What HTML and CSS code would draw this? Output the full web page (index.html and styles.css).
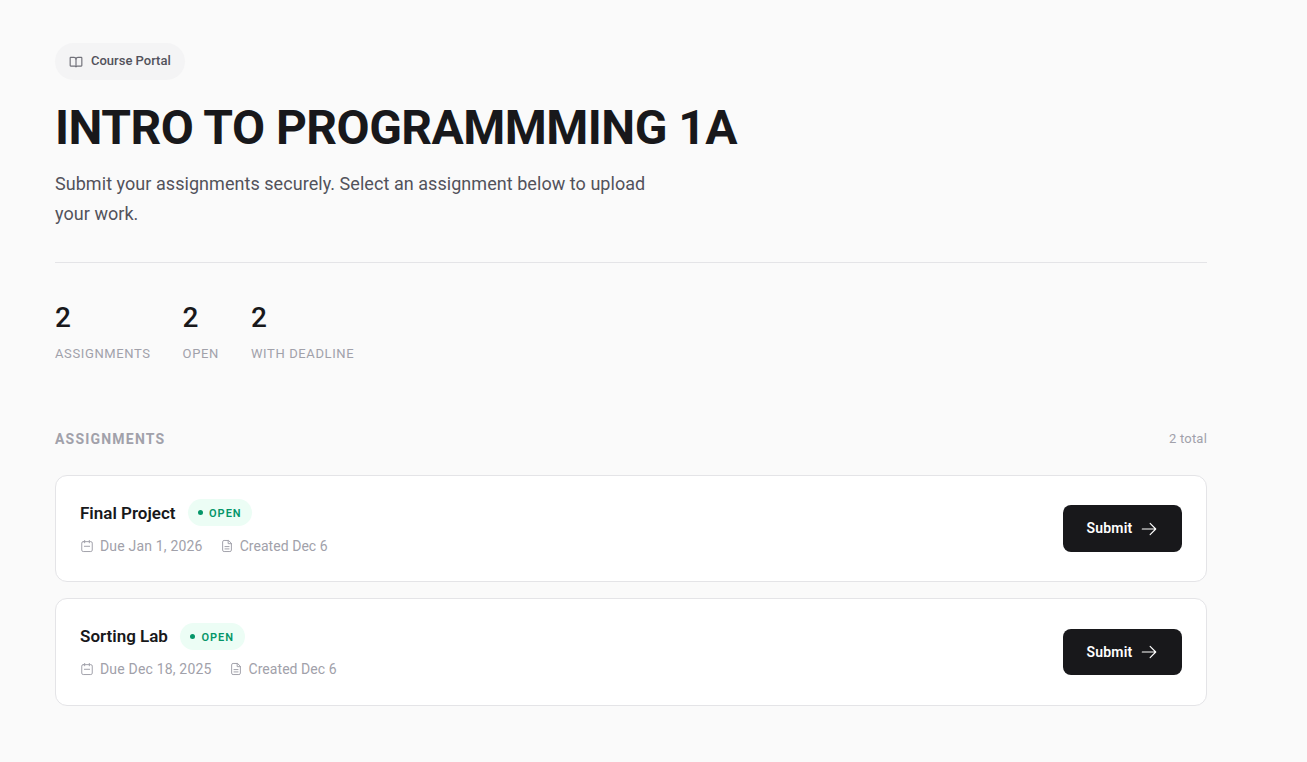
FILE: index.html
```html
<!DOCTYPE html>
<html lang="en">
<head>
<meta charset="utf-8">
<title>Intro to Programmming 1A</title>
<link rel="stylesheet" href="styles.css">
</head>
<body>
<main class="page">
  <header class="hero">
    <div class="pill">
      <svg class="pill-icon" viewBox="0 0 24 24" fill="none" stroke="currentColor" stroke-width="2" stroke-linecap="round" stroke-linejoin="round"><path d="M12 7v13"/><path d="M3 19a1 1 0 0 1-1-1V5a1 1 0 0 1 1-1h5.500a3.500 3.500 0 0 1 3.500 3 3.500 3.500 0 0 1 3.500-3H21a1 1 0 0 1 1 1v13a1 1 0 0 1-1 1h-6.500a2.500 2.500 0 0 0-2.500 1 2.500 2.500 0 0 0-2.500-1z"/></svg>
      <span class="pill-text">Course Portal</span>
    </div>
    <h1>INTRO TO PROGRAMMMING 1A</h1>
    <p class="lead">Submit your assignments securely. Select an assignment below to upload your work.</p>
  </header>
  <section class="stats">
    <div class="stat"><div class="stat-num">2</div><div class="stat-label">Assignments</div></div>
    <div class="stat"><div class="stat-num">2</div><div class="stat-label">Open</div></div>
    <div class="stat"><div class="stat-num">2</div><div class="stat-label">With deadline</div></div>
  </section>
  <section class="list">
    <div class="list-head"><h2>Assignments</h2><span class="total">2 total</span></div>
    <article class="card">
      <div class="card-main">
        <div class="title-row"><h3>Final Project</h3><span class="badge"><i class="dot"></i><span class="badge-text">OPEN</span></span></div>
        <div class="meta">
          <span class="meta-item"><svg class="meta-icon" viewBox="0 0 24 24" fill="none" stroke="currentColor" stroke-width="1.7" stroke-linecap="round" stroke-linejoin="round"><path d="M8 2.500v4M16 2.500v4"/><rect x="3" y="4.500" width="18" height="17" rx="2.500"/><path d="M7.500 12.500h9"/></svg>Due Jan 1, 2026</span>
          <span class="meta-item created"><svg class="meta-icon" viewBox="0 0 24 24" fill="none" stroke="currentColor" stroke-width="1.7" stroke-linecap="round" stroke-linejoin="round"><path d="M14 2.500H7a2.500 2.500 0 0 0-2.500 2.500v14A2.500 2.500 0 0 0 7 21.500h10a2.500 2.500 0 0 0 2.500-2.500V8z"/><path d="M14 2.500V8h5.500"/><path d="M8.500 13h7M8.500 17h7"/></svg>Created Dec 6</span>
        </div>
      </div>
      <button class="submit"><span class="submit-text">Submit</span><svg class="arrow" viewBox="0 0 24 24" fill="none" stroke="currentColor" stroke-width="1.5" stroke-linecap="round" stroke-linejoin="round"><path d="M13.500 4.500 21 12m0 0-7.500 7.500M21 12H3"/></svg></button>
    </article>
    <article class="card">
      <div class="card-main">
        <div class="title-row"><h3>Sorting Lab</h3><span class="badge"><i class="dot"></i><span class="badge-text">OPEN</span></span></div>
        <div class="meta">
          <span class="meta-item"><svg class="meta-icon" viewBox="0 0 24 24" fill="none" stroke="currentColor" stroke-width="1.7" stroke-linecap="round" stroke-linejoin="round"><path d="M8 2.500v4M16 2.500v4"/><rect x="3" y="4.500" width="18" height="17" rx="2.500"/><path d="M7.500 12.500h9"/></svg>Due Dec 18, 2025</span>
          <span class="meta-item created"><svg class="meta-icon" viewBox="0 0 24 24" fill="none" stroke="currentColor" stroke-width="1.7" stroke-linecap="round" stroke-linejoin="round"><path d="M14 2.500H7a2.500 2.500 0 0 0-2.500 2.500v14A2.500 2.500 0 0 0 7 21.500h10a2.500 2.500 0 0 0 2.500-2.500V8z"/><path d="M14 2.500V8h5.500"/><path d="M8.500 13h7M8.500 17h7"/></svg>Created Dec 6</span>
        </div>
      </div>
      <button class="submit"><span class="submit-text">Submit</span><svg class="arrow" viewBox="0 0 24 24" fill="none" stroke="currentColor" stroke-width="1.5" stroke-linecap="round" stroke-linejoin="round"><path d="M13.500 4.500 21 12m0 0-7.500 7.500M21 12H3"/></svg></button>
    </article>
  </section>
</main>
</body>
</html>
```
FILE: styles.css
```css
* { box-sizing: border-box; }
html, body { margin: 0; padding: 0; }
body {
  background: #fafafa;
  color: #18181b;
  font-family: "Roboto", "Noto Sans", sans-serif;
  height: 762px;
  overflow: hidden;
}
.page { width: 1207px; padding: 43px 0 0 55px; }
.hero { border-bottom: 1px solid #e4e4e7; padding-bottom: 33px; }
.pill {
  display: inline-flex; align-items: center; gap: 8px;
  height: 37px; padding: 0 14px;
  background: #f4f4f5; border-radius: 999px;
  color: #52525b; font-size: 13px; font-weight: 500;
}
.pill-text { padding-bottom: 2px; }
.pill-icon { width: 14px; height: 14px; color: #71717a; }
h1 {
  margin: 20px 0 0; font-size: 48px; line-height: 56px; font-weight: 700;
  letter-spacing: -0.52px; color: #18181b;
}
.lead {
  margin: 13px 0 0; width: 610px; font-size: 18px; line-height: 30px; color: #52525b;
  letter-spacing: 0.05px;
}
.stats { display: flex; gap: 32px; margin-top: 37px; }
.stat-num { font-size: 28px; line-height: 36px; font-weight: 500; color: #18181b; }
.stat-label {
  margin-top: 10px; font-size: 13px; line-height: 16px; letter-spacing: 0.62px;
  text-transform: uppercase; color: #a1a1aa;
}
.list { margin-top: 67px; }
.list-head { display: flex; justify-content: space-between; align-items: center; height: 20px; margin-bottom: 26px; }
h2 {
  margin: 0; font-size: 14px; font-weight: 700; letter-spacing: 1.2px;
  text-transform: uppercase; color: #a1a1aa;
}
.total { font-size: 13px; letter-spacing: 0.2px; color: #a1a1aa; padding-bottom: 2px; }
.card {
  display: flex; justify-content: space-between; align-items: center;
  height: 107.4px; padding: 0 24px; margin-bottom: 16px;
  background: #fff; border: 1px solid #e4e4e7; border-radius: 12px;
}
.card-main { padding-bottom: 2px; }
.title-row { display: flex; align-items: center; gap: 12px; }
h3 { margin: 0; font-size: 17px; line-height: 24px; font-weight: 600; color: #18181b; }
.badge {
  display: inline-flex; align-items: center; gap: 6px;
  height: 27px; padding: 0 10.5px;
  background: #ecfdf5; color: #059669; border-radius: 999px;
  font-size: 11px; font-weight: 600; letter-spacing: 1px;
}
.badge-text { padding-top: 2px; }
.dot { width: 5px; height: 5px; border-radius: 50%; background: #059669; }
.meta { display: flex; gap: 17px; margin-top: 9.8px; color: #a1a1aa; font-size: 14px; line-height: 20px; letter-spacing: 0.18px; }
.meta-item { display: inline-flex; align-items: center; gap: 6px; }
.created { letter-spacing: 0.05px; }
.meta-icon { width: 14px; height: 14px; }
.submit {
  display: inline-flex; align-items: center; justify-content: center; gap: 8px;
  width: 119px; height: 46.5px;
  background: #18181b; color: #fff; border: 0; border-radius: 8px;
  font: 600 14px "Roboto", sans-serif; letter-spacing: 0.2px;
}
.submit-text { padding-bottom: 1px; }
.arrow { width: 18px; height: 18px; }
```
